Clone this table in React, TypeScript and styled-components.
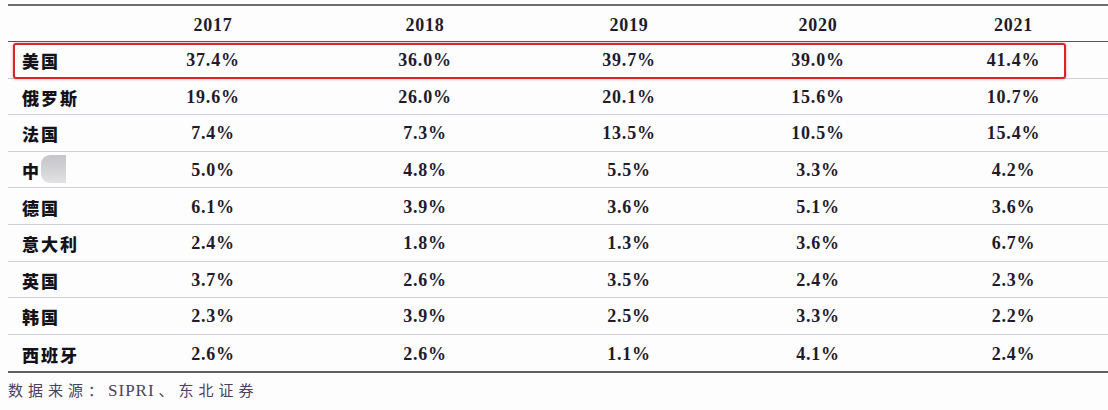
import { createGlobalStyle } from "styled-components"
import styled from "styled-components"

const GlobalStyle = createGlobalStyle`
    body {
        margin: 0;
        background: #fdfdfd;
    }
`

const years = ["2017", "2018", "2019", "2020", "2021"]

const rows = [
    { name: "美国", values: ["37.4%", "36.0%", "39.7%", "39.0%", "41.4%"], highlight: true },
    { name: "俄罗斯", values: ["19.6%", "26.0%", "20.1%", "15.6%", "10.7%"] },
    { name: "法国", values: ["7.4%", "7.3%", "13.5%", "10.5%", "15.4%"] },
    { name: "中", values: ["5.0%", "4.8%", "5.5%", "3.3%", "4.2%"], masked: true },
    { name: "德国", values: ["6.1%", "3.9%", "3.6%", "5.1%", "3.6%"] },
    { name: "意大利", values: ["2.4%", "1.8%", "1.3%", "3.6%", "6.7%"] },
    { name: "英国", values: ["3.7%", "2.6%", "3.5%", "2.4%", "2.3%"] },
    { name: "韩国", values: ["2.3%", "3.9%", "2.5%", "3.3%", "2.2%"] },
    { name: "西班牙", values: ["2.6%", "2.6%", "1.1%", "4.1%", "2.4%"] },
]

export const App = () => {
    return (
        <Page>
            <GlobalStyle />
            <Table>
                <HeaderRow>
                    <span />
                    {years.map((y) => (
                        <Cell key={y}>{y}</Cell>
                    ))}
                </HeaderRow>
                {rows.map((row) => (
                    <Row key={row.name}>
                        <Label>
                            {row.name}
                            {row.masked && <Mask />}
                        </Label>
                        {row.values.map((v, i) => (
                            <Cell key={i}>{v}</Cell>
                        ))}
                        {row.highlight && <Highlight />}
                    </Row>
                ))}
            </Table>
            <Source>
                数据来源：<Latin>SIPRI</Latin>、东北证券
            </Source>
        </Page>
    )
}

export default App

const Page = styled.div`
    width: 1108px;
    height: 410px;
    padding: 4px 0 0 8px;
    box-sizing: border-box;
    background: #fdfdfd;
`

const Table = styled.div`
    border-top: 2px solid #6d6d72;
    border-bottom: 2px solid #5f6066;
`

const gridCols = "109px 192px 232px 176px 202px 189px"

const HeaderRow = styled.div`
    display: grid;
    grid-template-columns: ${gridCols};
    height: 36px;
    padding-top: 3px;
    align-items: center;
    border-bottom: 1px solid #55565c;
    box-sizing: border-box;
`

const Row = styled.div`
    position: relative;
    display: grid;
    grid-template-columns: ${gridCols};
    height: 36.6px;
    padding-top: 2px;
    align-items: center;
    border-bottom: 1px solid #cdd1d8;
    box-sizing: border-box;
    &:last-child {
        border-bottom: none;
    }
`

const Cell = styled.div`
    text-align: center;
    font-family: "Liberation Serif", "Times New Roman", serif;
    font-weight: 700;
    font-size: 18px;
    letter-spacing: 0.8px;
    color: #1f1a2c;
`

const Label = styled.div`
    display: flex;
    align-items: center;
    padding-left: 14px;
    font-family: "Noto Sans CJK SC", sans-serif;
    font-weight: 900;
    font-size: 17px;
    letter-spacing: 2px;
    color: #141218;
`

const Mask = styled.span`
    display: inline-block;
    width: 25px;
    height: 28px;
    margin-top: -3px;
    border-radius: 9px 0 0 9px;
    background: linear-gradient(180deg, #c6c6ca 0%, #d4d4d7 55%, #e2e2e4 100%);
`

const Highlight = styled.div`
    position: absolute;
    left: 5px;
    top: 1px;
    bottom: -1px;
    width: 1053px;
    border: 2px solid #d4262b;
    border-radius: 3px;
    box-shadow: 0 0 3px rgba(214, 40, 45, 0.45);
    box-sizing: border-box;
    pointer-events: none;
`

const Source = styled.div`
    margin-top: 6px;
    font-family: "Noto Sans CJK SC", sans-serif;
    font-weight: 400;
    font-size: 15px;
    letter-spacing: 5px;
    color: #4b4060;
`

const Latin = styled.span`
    font-family: "Liberation Serif", serif;
    font-size: 17px;
    letter-spacing: 1px;
    margin-right: 4px;
`
